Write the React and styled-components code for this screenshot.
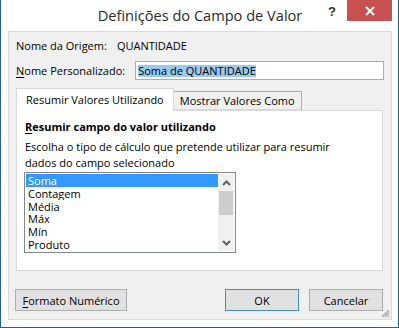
import React from "react";
import styled, { createGlobalStyle } from "styled-components";

const GlobalStyle = createGlobalStyle`
  html, body { margin: 0; padding: 0; background: #ffffff; }
  * { box-sizing: border-box; }
  body { font-family: "Open Sans", "Noto Sans", sans-serif; }
`;

const Window = styled.div`
  width: 399px;
  height: 328px;
  background: #ffffff;
  border-left: 1px solid #1f5f9c;
  border-right: 1px solid #1f5f9c;
  border-bottom: 1px solid #1f5f9c;
  display: flex;
  flex-direction: column;
  font-family: "Open Sans", "Noto Sans", sans-serif;
  font-size: 11px;
  color: #000;
`;

const TitleBar = styled.div`
  height: 31px;
  flex: none;
  display: grid;
  grid-template-columns: 1fr auto 1fr;
  align-items: start;
  padding: 0 6px 0 7px;
`;

const Title = styled.div`
  grid-column: 2;
  font-size: 14.6px;
  line-height: 31px;
  color: #2b2b2b;
  white-space: nowrap;
`;

const Controls = styled.div`
  grid-column: 3;
  justify-self: end;
  display: flex;
  align-items: flex-start;
`;

const HelpButton = styled.div`
  width: 30px;
  height: 21px;
  display: flex;
  align-items: center;
  justify-content: center;
  font-family: "Liberation Sans", Arial, sans-serif;
  font-weight: bold;
  font-size: 13px;
  color: #333;
  padding-top: 2px;
`;

const CloseButton = styled.div`
  width: 45px;
  height: 21px;
  background: #c75050;
  display: flex;
  align-items: center;
  justify-content: center;
`;

const Client = styled.div`
  flex: 1;
  margin: 0 6px 7px 7px;
  border: 1px solid #dadada;
  background: #f0f0f0;
  display: flex;
  flex-direction: column;
  position: relative;
  padding: 5px 7px 0 7px;
`;

const FieldRow = styled.div`
  display: flex;
  align-items: center;
  gap: ${(p) => p.$gap || 10}px;
  height: ${(p) => p.$h || 16}px;
  margin-top: ${(p) => p.$mt || 0}px;
  white-space: nowrap;
`;

const Key = styled.span`
  text-decoration: underline;
  text-underline-offset: 2px;
`;

const TextInput = styled.div`
  flex: 1;
  height: 19px;
  border: 1px solid #abadb3;
  background: #fff;
  display: flex;
  align-items: center;
  padding: 0 2px;
`;

const Selection = styled.span`
  background: #99c9ef;
  line-height: 12px;
`;

const TabStrip = styled.div`
  display: flex;
  align-items: flex-end;
  margin-top: 8px;
  height: 22px;
  position: relative;
  z-index: 1;
`;

const Tab = styled.div`
  height: ${(p) => (p.$active ? 23 : 19)}px;
  margin-bottom: ${(p) => (p.$active ? -1 : 0)}px;
  padding: 0 ${(p) => (p.$active ? 9 : 6)}px;
  border: 1px solid ${(p) => (p.$active ? "#d9d9d9" : "#acacac")};
  border-bottom: ${(p) => (p.$active ? "none" : "1px solid #d9d9d9")};
  border-left: ${(p) => (p.$active ? "1px solid #d9d9d9" : "none")};
  background: ${(p) => (p.$active ? "#ffffff" : "#f0f0f0")};
  display: flex;
  align-items: center;
  padding-bottom: ${(p) => (p.$active ? 2 : 0)}px;
  white-space: nowrap;
`;

const TabPanel = styled.div`
  height: 161px;
  margin-right: 1px;
  border: 1px solid #d9d9d9;
  background: #ffffff;
  padding: 8px 8px 0 8px;
  display: flex;
  flex-direction: column;
`;

const Heading = styled.div`
  font-weight: bold;
  line-height: 16px;
  white-space: nowrap;
`;

const Description = styled.div`
  margin-top: 4px;
  line-height: 16px;
`;

const ListBox = styled.div`
  width: 212px;
  height: 81px;
  margin: 1px 0 0 -1px;
  border: 1px solid #828790;
  padding: 1px;
  display: flex;
  background: #fff;
`;

const Items = styled.div`
  flex: 1;
  display: flex;
  flex-direction: column;
`;

const Item = styled.div`
  height: 13px;
  line-height: 13px;
  padding-left: 2px;
  overflow: hidden;
  background: ${(p) => (p.$selected ? "#3399ff" : "transparent")};
  color: ${(p) => (p.$selected ? "#ffffff" : "#000000")};
`;

const ScrollBar = styled.div`
  width: 16px;
  background: #f0f0f0;
  display: flex;
  flex-direction: column;
`;

const ArrowBox = styled.div`
  height: 17px;
  display: flex;
  align-items: center;
  justify-content: center;
`;

const Thumb = styled.div`
  height: 24px;
  margin: 0 1px;
  background: #cdcdcd;
`;

const Track = styled.div`
  flex: 1;
`;

const ButtonRow = styled.div`
  display: flex;
  align-items: center;
  margin-top: 18px;
  margin-left: -1px;
`;

const Button = styled.div`
  height: 22px;
  width: ${(p) => p.$w}px;
  margin-left: ${(p) => p.$ml || 0}px;
  border: 1px solid ${(p) => (p.$default ? "#3c8fd6" : "#adadad")};
  background: #e1e1e1;
  display: flex;
  align-items: center;
  justify-content: center;
  white-space: nowrap;
`;

const Grip = styled.svg`
  position: absolute;
  right: 1px;
  bottom: 1px;
`;

const Chevron = ({ down }) => (
  <svg width="9" height="6" viewBox="0 0 9 6">
    <path
      d={down ? "M1 1 L4.5 4.5 L8 1" : "M1 5 L4.5 1.5 L8 5"}
      fill="none"
      stroke="#606060"
      strokeWidth="2"
    />
  </svg>
);

const items = ["Soma", "Contagem", "Média", "Máx", "Mín", "Produto"];

export default function App() {
  return (
    <>
      <GlobalStyle />
      <Window>
        <TitleBar>
          <Title>Definições do Campo de Valor</Title>
          <Controls>
            <HelpButton>?</HelpButton>
            <CloseButton>
              <svg width="10" height="10" viewBox="0 0 10 10">
                <path d="M1 1 L9 9 M9 1 L1 9" stroke="#fff" strokeWidth="2" />
              </svg>
            </CloseButton>
          </Controls>
        </TitleBar>
        <Client>
          <FieldRow $h={16}>
            <span>Nome da Origem:</span>
            <span>QUANTIDADE</span>
          </FieldRow>
          <FieldRow $h={19} $mt={8}>
            <span>
              <Key>N</Key>ome Personalizado:
            </span>
            <TextInput>
              <Selection>Soma de QUANTIDADE</Selection>
            </TextInput>
          </FieldRow>
          <TabStrip>
            <Tab $active>Resumir Valores Utilizando</Tab>
            <Tab>Mostrar Valores Como</Tab>
          </TabStrip>
          <TabPanel>
            <Heading>
              <Key>R</Key>esumir campo do valor utilizando
            </Heading>
            <Description>
              Escolha o tipo de cálculo que pretende utilizar para resumir
              <br />
              dados do campo selecionado
            </Description>
            <ListBox>
              <Items>
                {items.map((it, i) => (
                  <Item key={it} $selected={i === 0}>
                    {it}
                  </Item>
                ))}
              </Items>
              <ScrollBar>
                <ArrowBox>
                  <Chevron />
                </ArrowBox>
                <Thumb />
                <Track />
                <ArrowBox>
                  <Chevron down />
                </ArrowBox>
              </ScrollBar>
            </ListBox>
          </TabPanel>
          <ButtonRow>
            <Button $w={112}>
              <span>
                <Key>F</Key>ormato Numérico
              </span>
            </Button>
            <Button $w={74} $ml={98} $default>
              OK
            </Button>
            <Button $w={74} $ml={10}>
              Cancelar
            </Button>
          </ButtonRow>
          <Grip width="10" height="10" viewBox="0 0 10 10">
            <path d="M9 2 L2 9 M9 5 L5 9 M9 8 L8 9" stroke="#a0a0a0" strokeWidth="1.2" />
          </Grip>
        </Client>
      </Window>
    </>
  );
}
